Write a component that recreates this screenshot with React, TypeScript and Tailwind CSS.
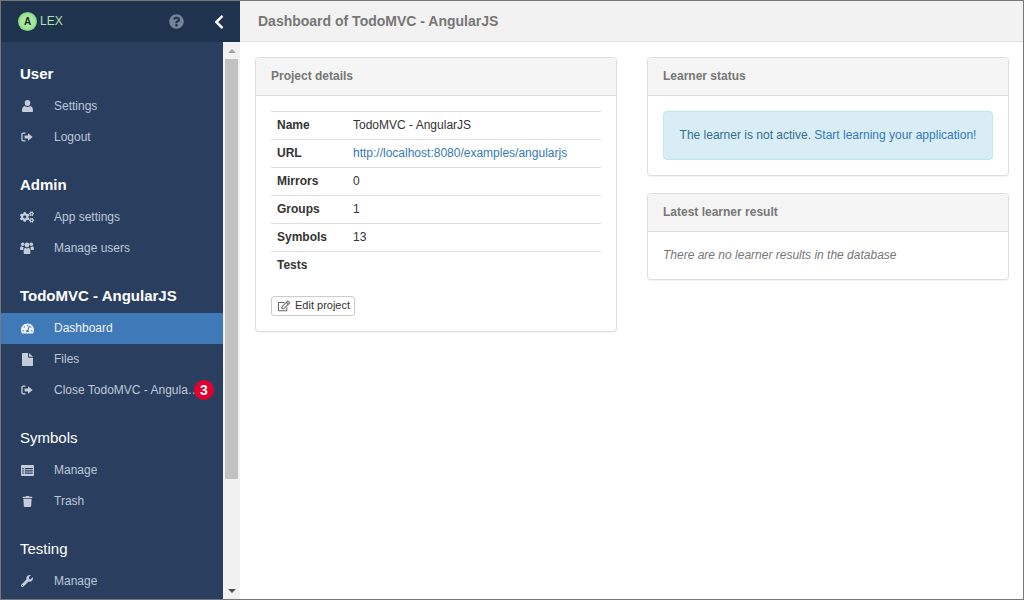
import type { ReactNode } from 'react';
import {
  FaChevronLeft,
  FaCogs,
  FaQuestionCircle,
  FaRegEdit,
  FaTachometerAlt,
  FaTrash,
  FaWrench,
} from 'react-icons/fa';

function UserIcon() {
  return (
    <svg viewBox="0 0 11 12" className="h-[12px] w-[11px] fill-current">
      <ellipse cx="5.500" cy="3" rx="2.800" ry="3" />
      <path d="M1 12c-.6 0-1-.4-1-1.100C0 8.300.8 6 2.800 6c.8.700 1.700 1 2.700 1s1.900-.3 2.700-1c2 0 2.800 2.300 2.800 4.900 0 .7-.4 1.100-1 1.100z" />
    </svg>
  );
}

function UsersIcon() {
  return (
    <svg viewBox="0 0 14 12" className="h-[12px] w-[14px] fill-current">
      <circle cx="2.700" cy="2.200" r="1.800" />
      <circle cx="11.300" cy="2.200" r="1.800" />
      <circle cx="7" cy="3" r="2.400" />
      <path d="M0 7c0-1.800.6-2.700 1.600-2.700.5.400 1 .6 1.500.6h.5c-.3.800-.3 2-.2 3H1c-.6 0-1-.3-1-.9z" />
      <path d="M14 7c0-1.800-.6-2.700-1.600-2.700-.5.400-1 .6-1.500.6h-.5c.3.800.3 2 .2 3H13c.6 0 1-.3 1-.9z" />
      <path d="M4.600 12c-.6 0-1-.4-1-1 0-3 .5-5.200 1.700-5.200.5.400 1.100.6 1.700.6s1.200-.2 1.700-.6c1.200 0 1.700 2.200 1.700 5.200 0 .6-.4 1-1 1z" />
    </svg>
  );
}

function SignOutIcon() {
  return (
    <svg viewBox="0 0 12 12" className="h-[12px] w-[12px] fill-current">
      <path d="M4.500 1.500v1.200H2.600c-.6 0-1 .4-1 1v4.600c0 .6.4 1 1 1h1.900v1.200H2.400C1.100 10.500.3 9.700.3 8.500v-5C.3 2.300 1.100 1.500 2.400 1.500z" />
      <path d="M7 2.200 11.700 6 7 9.800V7.500H3.600v-3H7z" />
    </svg>
  );
}

function FileIcon() {
  return (
    <svg viewBox="0 0 11 13" className="h-[13px] w-[11px] fill-current">
      <path d="M0 .8C0 .3.3 0 .8 0H6v4c0 .5.3.8.8.8H11v7.400c0 .5-.3.8-.8.8H.8c-.5 0-.8-.3-.8-.8z" />
      <path d="M7 0l4 3.800H7z" />
    </svg>
  );
}

function ListIcon() {
  return (
    <svg viewBox="0 0 13 11" className="h-[11px] w-[13px] fill-current">
      <path
        fillRule="evenodd"
        d="M1 0h11a1 1 0 0 1 1 1v9a1 1 0 0 1-1 1H1a1 1 0 0 1-1-1V1a1 1 0 0 1 1-1zm.2 3v1.300h1.600V3zm2.600 0v1.300h8V3zM1.200 5.200v1.300h1.600V5.200zm2.600 0v1.300h8V5.200zM1.200 7.400v1.300h1.600V7.400zm2.600 0v1.300h8V7.400z"
      />
    </svg>
  );
}

function NavItem({
  icon,
  label,
  active,
  badge,
}: {
  icon: ReactNode;
  label: string;
  active?: boolean;
  badge?: string;
}) {
  return (
    <div
      className={
        'relative flex h-[31px] items-center pb-px pl-[19px] text-[12px] ' +
        (active ? 'bg-[#4079b7] text-[#eef3f8]' : 'text-[#bcc8d8]')
      }
    >
      <span className={'mr-[20px] flex w-[14px] shrink-0 items-center justify-center ' + (active ? 'text-[#eef3f8]' : 'text-[#c3ccd8]')}>
        {icon}
      </span>
      <span className="block max-w-[148px] truncate">{label}</span>
      {badge && (
        <span className="absolute left-[193px] top-[5px] flex h-[20px] w-[20px] items-center justify-center rounded-full bg-[#e2002d] text-[14px] font-bold text-white">
          {badge}
        </span>
      )}
    </div>
  );
}

function NavHeading({ children, bold }: { children: ReactNode; bold?: boolean }) {
  return (
    <div className={'flex h-[49px] items-end pb-[7px] pl-[19px] text-[15px] leading-[20px] text-white ' + (bold ? 'font-bold' : '')}>
      {children}
    </div>
  );
}

function Panel({ title, children }: { title: string; children: ReactNode }) {
  return (
    <div className="rounded-[4px] border border-[#ddd] bg-white shadow-[0_1px_1px_rgba(0,0,0,0.05)]">
      <div className="flex h-[38px] items-center rounded-t-[3px] border-b border-[#ddd] bg-[#f5f5f5] px-[15px] text-[12px] font-bold text-[#777]">
        {title}
      </div>
      <div className="p-[15px]">{children}</div>
    </div>
  );
}

const details = [
  { name: 'Name', value: 'TodoMVC - AngularJS' },
  { name: 'URL', value: 'http://localhost:8080/examples/angularjs', link: true },
  { name: 'Mirrors', value: '0' },
  { name: 'Groups', value: '1' },
  { name: 'Symbols', value: '13' },
  { name: 'Tests', value: '' },
];

export default function App() {
  return (
    <div className="flex h-[600px] w-[1024px] overflow-hidden border border-[#777] bg-white font-['Liberation_Sans',Arial,sans-serif] text-[12px] leading-[17px] text-[#333]">
      <aside className="flex w-[239px] shrink-0 flex-col">
        <div className="flex h-[41px] shrink-0 items-center bg-[#1f334f] pl-[17px]">
          <span className="flex h-[19px] w-[19px] items-center justify-center rounded-full bg-[radial-gradient(circle,#b6efac_0%,#9fe596_55%,#4fa353_100%)] text-[10px] font-bold text-[#14251f]">
            A
          </span>
          <span className="ml-[3px] text-[12px] font-medium text-[#a6e6a6]">LEX</span>
          <span className="ml-[106px] text-[#75849b]">
            <FaQuestionCircle size={15} />
          </span>
          <span className="ml-[27px] text-white">
            <FaChevronLeft size={16} />
          </span>
        </div>
        <div className="flex min-h-0 flex-1">
          <nav className="w-[222px] shrink-0 overflow-hidden bg-[#2a3f5f]">
            <NavHeading bold>User</NavHeading>
            <NavItem icon={<UserIcon />} label="Settings" />
            <NavItem icon={<SignOutIcon />} label="Logout" />
            <NavHeading bold>Admin</NavHeading>
            <NavItem icon={<FaCogs size={14} />} label="App settings" />
            <NavItem icon={<UsersIcon />} label="Manage users" />
            <NavHeading bold>TodoMVC - AngularJS</NavHeading>
            <NavItem icon={<FaTachometerAlt size={13} />} label="Dashboard" active />
            <NavItem icon={<FileIcon />} label="Files" />
            <NavItem icon={<SignOutIcon />} label="Close TodoMVC - AngularJS" badge="3" />
            <NavHeading>Symbols</NavHeading>
            <NavItem icon={<ListIcon />} label="Manage" />
            <NavItem icon={<FaTrash size={11} />} label="Trash" />
            <NavHeading>Testing</NavHeading>
            <NavItem icon={<FaWrench size={12} />} label="Manage" />
          </nav>
          <div className="flex w-[17px] shrink-0 flex-col items-center bg-[#f1f1f1]">
            <div className="flex h-[17px] w-full shrink-0 items-center justify-center">
              <span className="h-0 w-0 border-x-[4px] border-b-[4px] border-x-transparent border-b-[#a3a3a3]" />
            </div>
            <div className="h-[420px] w-[13px] shrink-0 bg-[#c1c1c1]" />
            <div className="flex-1" />
            <div className="flex h-[17px] w-full shrink-0 items-center justify-center">
              <span className="h-0 w-0 border-x-[4px] border-t-[4px] border-x-transparent border-t-[#505050]" />
            </div>
          </div>
        </div>
      </aside>

      <main className="min-w-0 flex-1">
        <div className="flex h-[41px] items-center border-b border-[#ddd] bg-[#f2f2f2] pl-[18px] text-[14px] font-bold text-[#777]">
          Dashboard of TodoMVC - AngularJS
        </div>
        <div className="grid grid-cols-2 items-start gap-x-[30px] pl-[15px] pr-[14px] pt-[15px]">
          <Panel title="Project details">
            <table className="w-full border-collapse">
              <tbody>
                {details.map((row) => (
                  <tr key={row.name} className="h-[28px]">
                    <th className="w-[82px] border-t border-[#ddd] pl-[6px] text-left font-bold">{row.name}</th>
                    <td className="border-t border-[#ddd]">
                      {row.link ? <a className="text-[#337ab7]">{row.value}</a> : row.value}
                    </td>
                  </tr>
                ))}
              </tbody>
            </table>
            <button className="mt-[16px] flex h-[20px] w-[84px] items-center rounded-[3px] border border-[#ccc] bg-white pl-[6px] text-[11px] text-[#333]">
              <FaRegEdit size={12} className="mr-[5px] text-[#666]" />
              Edit project
            </button>
          </Panel>
          <div className="flex flex-col gap-[17px]">
            <Panel title="Learner status">
              <div className="flex h-[49px] items-center justify-center rounded-[4px] border border-[#bce8f1] bg-[#d9edf7] text-[#31708f]">
                <span>
                  The learner is not active. <a className="text-[#337ab7]">Start learning your application!</a>
                </span>
              </div>
            </Panel>
            <Panel title="Latest learner result">
              <em className="block text-[#777]">There are no learner results in the database</em>
            </Panel>
          </div>
        </div>
      </main>
    </div>
  );
}
